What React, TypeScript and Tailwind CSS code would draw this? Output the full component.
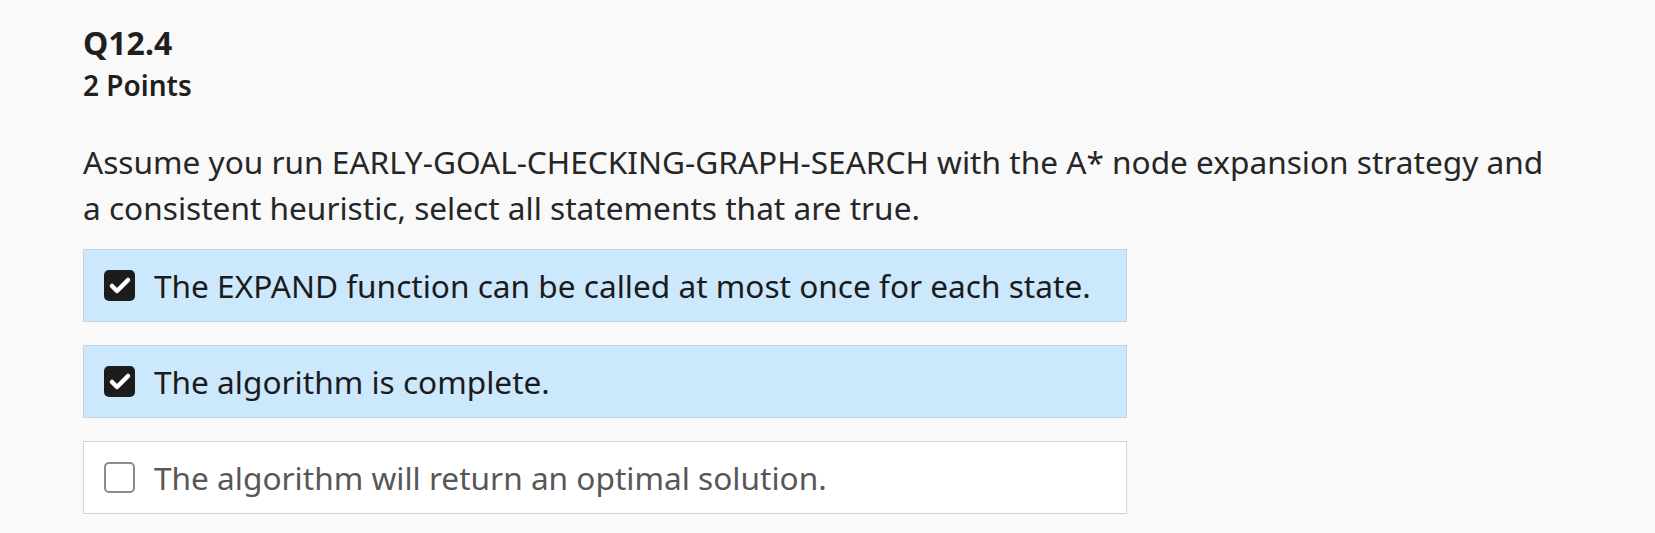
import { Check } from "lucide-react";

type Option = {
    label: string;
    checked: boolean;
};

const options: Option[] = [
    { label: "The EXPAND function can be called at most once for each state.", checked: true },
    { label: "The algorithm is complete.", checked: true },
    { label: "The algorithm will return an optimal solution.", checked: false },
];

function OptionRow({ option }: { option: Option }) {
    return (
        <label
            className={
                option.checked
                    ? "flex items-center h-[73px] pl-[20px] border border-[#c6d3dc] bg-[#cce8fd] text-[#1b1b1b]"
                    : "flex items-center h-[73px] pl-[20px] border border-[#d4d4d4] bg-white text-[#575757]"
            }
        >
            {option.checked ? (
                <span className="flex items-center justify-center w-[31px] h-[31px] rounded-[5px] bg-[#1c1c1c]">
                    <Check className="w-[24px] h-[24px] text-white" strokeWidth={4.5} />
                </span>
            ) : (
                <span className="w-[31px] h-[31px] rounded-[5px] border-2 border-[#8c8c8c] bg-white"></span>
            )}
            <span className="ml-[19px] text-[31.6px] leading-[44px]">{option.label}</span>
        </label>
    );
}

export default function App() {
    return (
        <div className="w-[1655px] h-[533px] bg-[#f9f9f9] pl-[83px] pt-[23px] font-['Noto_Sans',sans-serif] text-[#1f1f1f] overflow-hidden">
            <h2 className="text-[32px] leading-[40px] font-bold">Q12.4</h2>
            <div className="text-[28px] leading-[44px] font-semibold">2 Points</div>

            <p className="mt-[32px] text-[31.6px] leading-[46px] text-[#262626] w-[1475px]">
                Assume you run EARLY-GOAL-CHECKING-GRAPH-SEARCH with the A* node expansion strategy and a consistent heuristic, select all statements that are true.
            </p>

            <div className="mt-[18px] w-[1044px] flex flex-col gap-[23px]">
                {options.map((o) => (
                    <OptionRow key={o.label} option={o} />
                ))}
            </div>
        </div>
    );
}
